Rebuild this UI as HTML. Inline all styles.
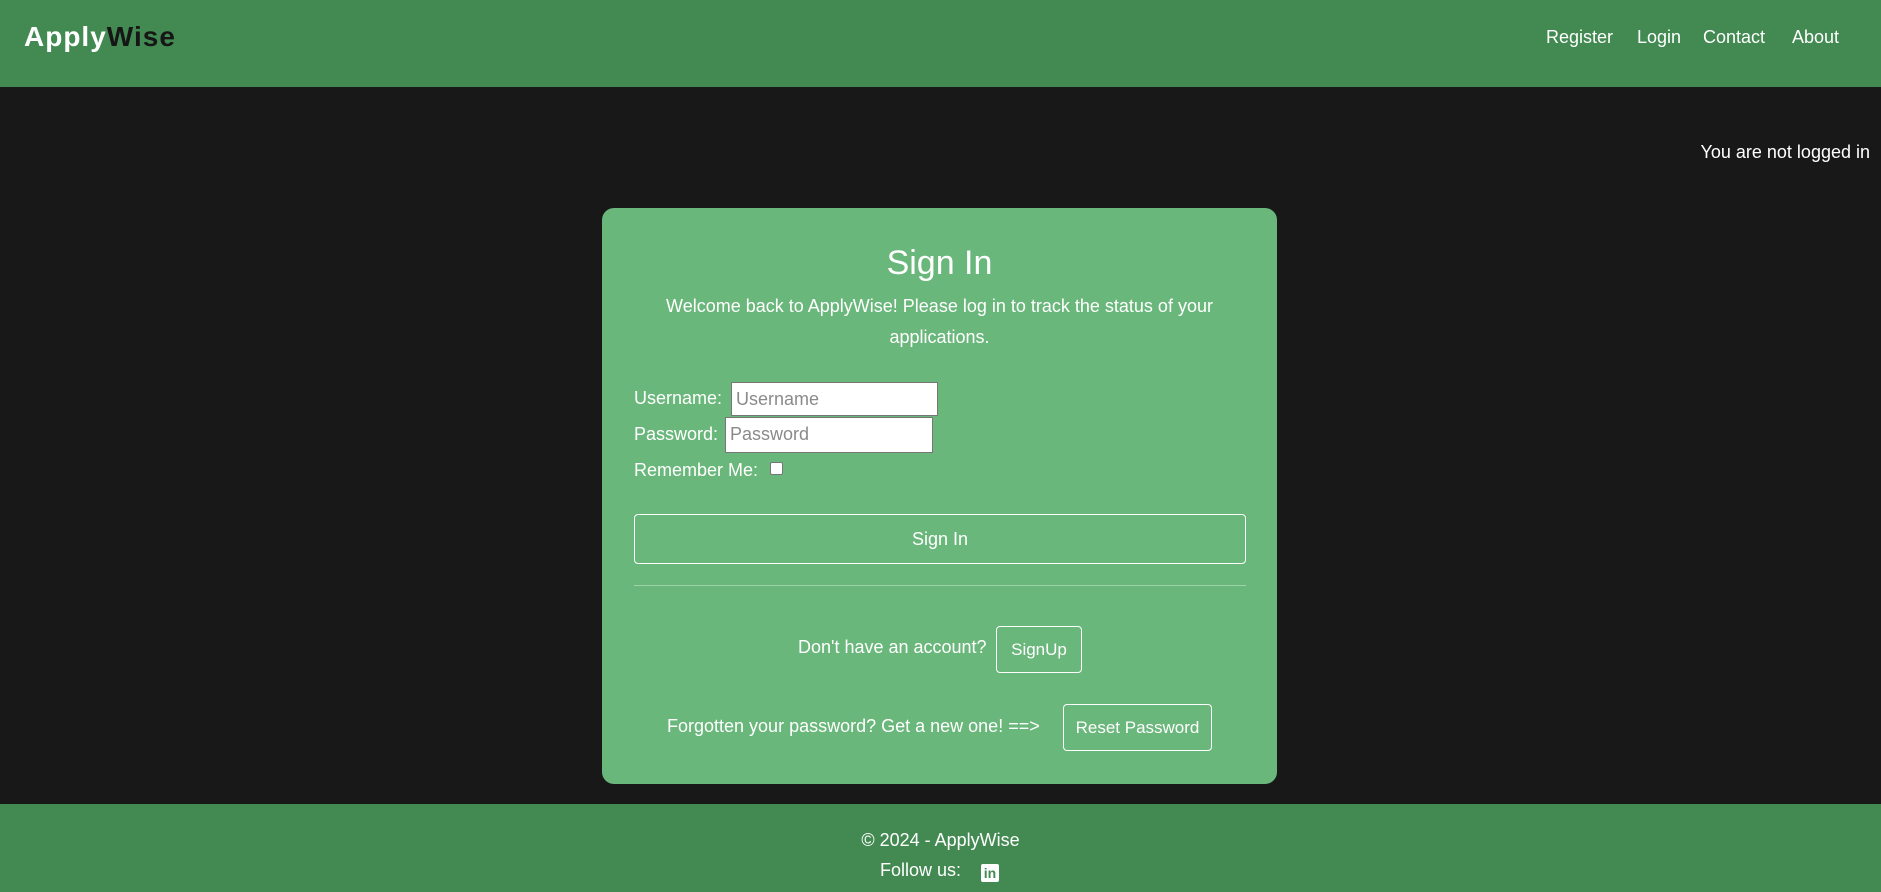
<!DOCTYPE html>
<html><head><meta charset="utf-8"><style>
*{margin:0;padding:0;box-sizing:border-box}
body{width:1881px;height:892px;background:#181818;font-family:"Liberation Sans",sans-serif;color:#fff;position:relative;overflow:hidden}
.a{position:absolute;white-space:nowrap}
header{position:absolute;left:0;top:0;width:1881px;height:87px;background:#428a52}
footer{position:absolute;left:0;top:804px;width:1881px;height:88px;background:#428a52}
.card{position:absolute;left:602px;top:208px;width:675px;height:576px;background:#6ab77b;border-radius:12px}
.inp{position:absolute;background:#fff;border:1px solid #767676;color:#8a8a8a;font-size:18px;padding-left:4px;line-height:32px}
.btn{position:absolute;border:1px solid #fff;border-radius:4px;font-size:17px;display:flex;align-items:center;justify-content:center}
.t{font-size:18px}
</style></head><body>
<header>
<div class="a" style="left:24px;top:21px;font-size:28px;font-weight:bold;letter-spacing:1px"><span style="color:#fff">Apply</span><span style="color:#161616">Wise</span></div>
<div class="a t" style="left:1546px;top:27px">Register</div>
<div class="a t" style="left:1637px;top:27px">Login</div>
<div class="a t" style="left:1703px;top:27px">Contact</div>
<div class="a t" style="left:1792px;top:27px">About</div>
</header>
<div class="a t" style="right:11px;top:142px">You are not logged in</div>
<div class="card">
<div class="a" style="left:0;width:675px;text-align:center;top:36px;font-size:34px">Sign In</div>
<div class="a t" style="left:0;width:675px;text-align:center;top:83px;line-height:31px;white-space:normal;padding:0 40px">Welcome back to ApplyWise! Please log in to track the status of your applications.</div>
<div class="a t" style="left:32px;top:180px">Username:</div>
<div class="inp" style="left:129px;top:174px;width:207px;height:34px">Username</div>
<div class="a t" style="left:32px;top:216px">Password:</div>
<div class="inp" style="left:123px;top:209px;width:208px;height:36px">Password</div>
<div class="a t" style="left:32px;top:252px">Remember Me:</div>
<div class="a" style="left:168px;top:254px;width:13px;height:13px;background:#fff;border:1px solid #767676;border-radius:2px"></div>
<div class="btn" style="left:32px;top:306px;width:612px;height:50px;font-size:18px">Sign In</div>
<div class="a" style="left:32px;top:377px;width:612px;height:1px;background:rgba(255,255,255,0.35)"></div>
<div class="a t" style="left:196px;top:429px">Don't have an account?</div>
<div class="btn" style="left:394px;top:418px;width:86px;height:47px">SignUp</div>
<div class="a t" style="left:65px;top:508px">Forgotten your password? Get a new one! ==&gt;</div>
<div class="btn" style="left:461px;top:496px;width:149px;height:47px">Reset Password</div>
</div>
<footer>
<div class="a t" style="left:0;width:1881px;text-align:center;top:26px">© 2024 - ApplyWise</div>
<div class="a t" style="left:880px;top:56px">Follow us:</div>
<div class="a" style="left:981px;top:60px;width:18px;height:18px;background:#fff;border-radius:2px;color:#428a52;font-size:14px;font-weight:bold;text-align:center;line-height:18px">in</div>
</footer>
</body></html>
